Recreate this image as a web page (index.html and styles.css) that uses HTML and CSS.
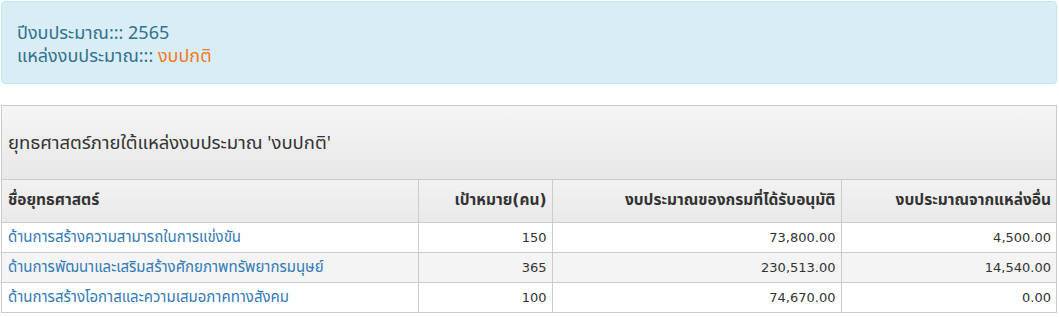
FILE: index.html
```html
<!DOCTYPE html>
<html lang="th">
<head>
<meta charset="utf-8">
<title>ยุทธศาสตร์</title>
<link rel="stylesheet" href="styles.css">
</head>
<body>
<div class="page">
  <div class="alert-info">
    <div class="alert-line">ปีงบประมาณ::: 2565</div>
    <div class="alert-line">แหล่งงบประมาณ::: <span class="source">งบปกติ</span></div>
  </div>

  <div class="panel">
    <div class="panel-heading">ยุทธศาสตร์ภายใต้แหล่งงบประมาณ 'งบปกติ'</div>
    <table class="grid">
      <colgroup>
        <col class="c-name">
        <col class="c-target">
        <col class="c-dept">
        <col class="c-other">
      </colgroup>
      <thead>
        <tr>
          <th class="left">ชื่อยุทธศาสตร์</th>
          <th>เป้าหมาย(คน)</th>
          <th>งบประมาณของกรมที่ได้รับอนุมัติ</th>
          <th>งบประมาณจากแหล่งอื่น</th>
        </tr>
      </thead>
      <tbody>
        <tr>
          <td class="left"><a href="#">ด้านการสร้างความสามารถในการแข่งขัน</a></td>
          <td>150</td>
          <td>73,800.00</td>
          <td>4,500.00</td>
        </tr>
        <tr>
          <td class="left"><a href="#">ด้านการพัฒนาและเสริมสร้างศักยภาพทรัพยากรมนุษย์</a></td>
          <td>365</td>
          <td>230,513.00</td>
          <td>14,540.00</td>
        </tr>
        <tr>
          <td class="left"><a href="#">ด้านการสร้างโอกาสและความเสมอภาคทางสังคม</a></td>
          <td>100</td>
          <td>74,670.00</td>
          <td>0.00</td>
        </tr>
      </tbody>
    </table>
  </div>
</div>
</body>
</html>
```

FILE: styles.css
```css
* { box-sizing: border-box; }

html, body {
  margin: 0;
  background: #fff;
}

body {
  font-family: Tahoma, "DejaVu Sans", "Noto Sans Thai", "Noto Sans", sans-serif;
  font-size: 13px;
  color: #333;
}

.page {
  padding: 1px 2px 0 1px;
  display: flex;
  flex-direction: column;
  gap: 21px;
}

/* info box with budget year and source */
.alert-info {
  background: #d9edf7;
  border: 1px solid #bce8f1;
  border-radius: 4px;
  color: #31708f;
  padding: 20px 15px 15px;
  font-family: "Noto Sans Thai", "Noto Sans", sans-serif;
  font-size: 18px;
  line-height: 23px;
}

.alert-info .source {
  color: #f47920;
}

/* panel with heading and table */
.panel {
  border: 1px solid #ccc;
  border-bottom: 0;
}

.panel-heading {
  height: 74px;
  display: flex;
  align-items: center;
  padding: 0 6px;
  background: linear-gradient(#f5f5f5, #e8e8e8);
  border-bottom: 1px solid #ccc;
  font-family: "Noto Sans Thai", "Noto Sans", sans-serif;
  font-size: 18.5px;
  color: #333;
}

.grid {
  width: 100%;
  border-collapse: collapse;
  table-layout: fixed;
}

.c-name { width: 416px; }
.c-target { width: 134px; }
.c-dept { width: 289px; }

.grid th,
.grid td {
  text-align: right;
  padding: 0 5px 0 6px;
  border-left: 1px solid #ccc;
  border-bottom: 1px solid #ccc;
  white-space: nowrap;
}

.grid th:first-child,
.grid td:first-child { border-left: 0; }

.grid .left { text-align: left; }

.grid thead tr {
  height: 42px;
  background: linear-gradient(#f2f2f2, #e9e9e9);
}

.grid th {
  font-weight: bold;
  font-size: 15.5px;
  color: #333;
}

.grid tbody tr { height: 30px; }
.grid tbody tr:nth-child(even) { background: #f4f4f4; }

.grid td { color: #333; }

.grid td.left { font-size: 15px; }

.grid a {
  color: #337ab7;
  text-decoration: none;
}
```
